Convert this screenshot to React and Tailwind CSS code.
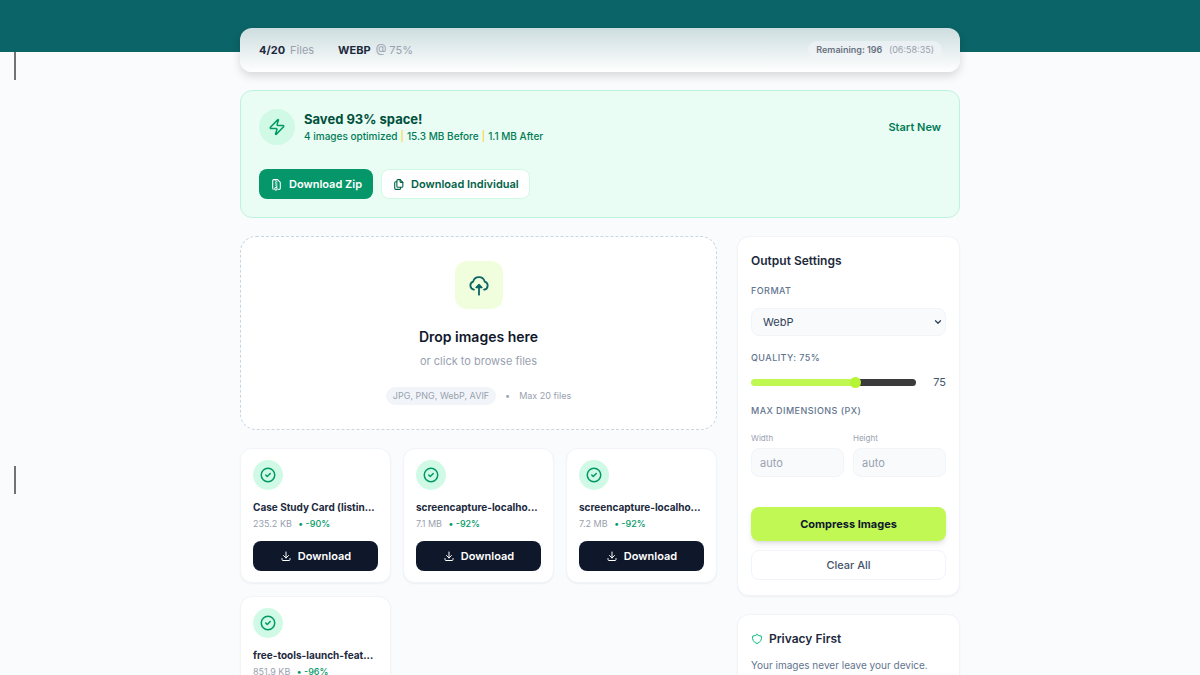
import React, { useState } from 'react';
import { Zap } from 'lucide-react';
import { TbChevronDown, TbCircleCheck, TbDownload, TbFileZip, TbFiles, TbShield } from 'react-icons/tb';

const FILES = [
    { id: 1, name: 'Case Study Card (listin...', size: '235.2 KB', saved: '-90%' },
    { id: 2, name: 'screencapture-localho...', size: '7.1 MB', saved: '-92%' },
    { id: 3, name: 'screencapture-localho...', size: '7.2 MB', saved: '-92%' },
    { id: 4, name: 'free-tools-launch-feat...', size: '851.9 KB', saved: '-96%' },
];

const MIN_QUALITY = 30;
const MAX_QUALITY = 100;

function CloudArrowIcon() {
    return (
        <svg width="22" height="22" viewBox="0 0 24 24" fill="none" stroke="currentColor" strokeWidth="2" strokeLinecap="round" strokeLinejoin="round" aria-hidden="true">
            <path d="M6.5 17A4.5 4.5 0 0 1 5.6 8.3a6.5 6.5 0 0 1 12.6-.1A4.5 4.5 0 0 1 17.5 17" />
            <path d="M12 22.5V13" />
            <path d="M12 11.5l3.2 3.2H8.8z" fill="currentColor" strokeWidth="1.5" />
        </svg>
    );
}

function StatusBar({ quality }) {
    return (
        <div className="relative flex items-center justify-between h-11 pl-[19px] pr-[18px] rounded-xl bg-gradient-to-b from-[#cddddf] to-white shadow-[0_4px_10px_rgba(0,0,0,0.14)]">
            <div className="flex items-center gap-6 text-[11px] text-gray-400">
                <span><strong className="font-bold text-slate-800 mr-[5px]">4/20</strong>Files</span>
                <span><strong className="font-bold text-slate-800 mr-[5px]">WEBP</strong>@ {quality}%</span>
            </div>
            <div className="rounded-full bg-slate-100/60 px-2 py-px text-[9px] leading-4 text-gray-400">
                <span className="font-semibold text-gray-500 mr-1">Remaining: 196</span> (06:58:35)
            </div>
        </div>
    );
}

function SavedBanner() {
    return (
        <section className="mt-[18px] rounded-xl border border-[#bdf3dc] bg-[#e9fdf4] px-[18px] py-[18px]">
            <div className="flex items-center justify-between">
                <div className="flex items-center gap-[9px]">
                    <div className="flex size-9 items-center justify-center rounded-full bg-emerald-100 text-emerald-600">
                        <Zap size={18} />
                    </div>
                    <div className="pt-0.5">
                        <h2 className="text-[13px] leading-[17px] font-bold text-emerald-900">Saved 93% space!</h2>
                        <p className="flex gap-[3px] text-[10px] leading-[17px] font-medium text-emerald-700">
                            <span>4 images optimized</span>
                            <span className="text-amber-300">|</span>
                            <span>15.3 MB Before</span>
                            <span className="text-amber-300">|</span>
                            <span>1.1 MB After</span>
                        </p>
                    </div>
                </div>
                <button type="button" className="text-[11px] font-semibold text-emerald-700">Start New</button>
            </div>
            <div className="mt-6 flex gap-2">
                <button type="button" className="flex h-[30px] items-center gap-1.5 rounded-lg bg-[#059669] px-[11px] text-[11px] font-semibold text-white">
                    <TbFileZip size={13} />
                    Download Zip
                </button>
                <button type="button" className="flex h-[30px] items-center gap-1.5 rounded-lg border border-emerald-100 bg-white px-2.5 text-[11px] font-semibold text-emerald-800">
                    <TbFiles size={13} />
                    Download Individual
                </button>
            </div>
        </section>
    );
}

function DropZone() {
    return (
        <button type="button" className="flex w-full flex-col items-center rounded-2xl border border-dashed border-slate-300 bg-white pt-6 pb-6">
            <span className="flex size-12 items-center justify-center rounded-xl bg-[#f1fedd] text-[#0b6666]">
                <CloudArrowIcon />
            </span>
            <span className="mt-[18px] text-[14px] leading-5 font-semibold text-slate-900">Drop images here</span>
            <span className="mt-1.5 text-[11px] leading-4 text-gray-400">or click to browse files</span>
            <span className="mt-[18px] flex items-center gap-[9px] text-[9px] leading-[18px] text-gray-400">
                <span className="rounded-full bg-slate-100 px-[7px]">JPG, PNG, WebP, AVIF</span>
                <span>•</span>
                <span>Max 20 files</span>
            </span>
        </button>
    );
}

function FileCard({ file }) {
    return (
        <li className="min-w-0 rounded-xl border border-slate-100 bg-white px-3 py-[11px] shadow-xs">
            <div className="flex size-[30px] items-center justify-center rounded-full bg-emerald-100 text-emerald-600">
                <TbCircleCheck size={18} />
            </div>
            <p className="mt-2 text-[10px] leading-[18px] font-bold whitespace-nowrap text-slate-800">{file.name}</p>
            <p className="text-[9px] leading-4 text-gray-400">
                {file.size} <span className="ml-1 font-medium text-emerald-600">• {file.saved}</span>
            </p>
            <button type="button" className="mt-[9px] flex h-[30px] w-full items-center justify-center gap-1.5 rounded-lg bg-[#0f172a] text-[11px] font-semibold text-white">
                <TbDownload size={12} />
                Download
            </button>
        </li>
    );
}

function OutputSettings({ quality, setQuality }) {
    const fill = ((quality - MIN_QUALITY) / (MAX_QUALITY - MIN_QUALITY)) * 100;

    return (
        <section className="rounded-xl border border-slate-100 bg-white px-[13px] pt-[14px] pb-[15px] shadow-xs">
            <h2 className="text-[12px] leading-5 font-semibold text-slate-800">Output Settings</h2>

            <label htmlFor="format" className="mt-3 block text-[9px] leading-4 font-medium tracking-wider text-slate-500">FORMAT</label>
            <div className="relative mt-[9px]">
                <select id="format" className="block h-7 w-full appearance-none rounded-lg border border-slate-100 bg-slate-50 px-[11px] text-[11px] text-slate-700">
                    <option>WebP</option>
                    <option>AVIF</option>
                    <option>JPG</option>
                </select>
                <TbChevronDown size={10} strokeWidth={3} className="pointer-events-none absolute top-[9px] right-[3px] text-slate-700" />
            </div>

            <label htmlFor="quality" className="mt-[14px] block text-[9px] leading-4 font-medium tracking-wider text-slate-500">QUALITY: {quality}%</label>
            <div className="mt-2 flex items-center justify-between gap-[17px]">
                <input
                    id="quality"
                    type="range"
                    min={MIN_QUALITY}
                    max={MAX_QUALITY}
                    value={quality}
                    onChange={(e) => setQuality(Number(e.target.value))}
                    className="h-[7px] min-w-0 flex-1 appearance-none rounded-full bg-[#3b3b3b] [&::-webkit-slider-thumb]:size-[11px] [&::-webkit-slider-thumb]:appearance-none [&::-webkit-slider-thumb]:rounded-full [&::-webkit-slider-thumb]:bg-[#b5f536]"
                    style={{ backgroundImage: `linear-gradient(to right, #bff850 ${fill}%, transparent 0)` }}
                />
                <output htmlFor="quality" className="text-[11px] leading-4 text-slate-600">{quality}</output>
            </div>

            <fieldset>
                <legend className="pt-[13px] text-[9px] leading-4 font-medium tracking-wider text-slate-500">MAX DIMENSIONS (PX)</legend>
                <div className="mt-[13px] grid grid-cols-2 gap-[9px]">
                    <label className="text-[8px] leading-3 text-gray-400">
                        Width
                        <input type="text" placeholder="auto" className="mt-1 block h-[29px] w-full rounded-lg border border-slate-100 bg-slate-50 px-2 text-[11px] placeholder:text-gray-400" />
                    </label>
                    <label className="text-[8px] leading-3 text-gray-400">
                        Height
                        <input type="text" placeholder="auto" className="mt-1 block h-[29px] w-full rounded-lg border border-slate-100 bg-slate-50 px-2 text-[11px] placeholder:text-gray-400" />
                    </label>
                </div>
            </fieldset>

            <button type="button" className="mt-[30px] h-[34px] w-full rounded-lg bg-[#c1f854] text-[11px] font-bold text-slate-900 shadow-md">Compress Images</button>
            <button type="button" className="mt-[9px] h-[30px] w-full rounded-lg border border-slate-100 bg-white text-[11px] font-medium text-slate-600">Clear All</button>
        </section>
    );
}

export default function App() {
    const [quality, setQuality] = useState(75);

    return (
        <div className="relative h-screen overflow-hidden bg-[#fafbfd] font-['Inter',sans-serif]">
            <div className="absolute inset-x-0 top-0 h-[52px] bg-[#0b6467]" />
            <div className="absolute left-[14px] top-[52px] h-7 w-0.5 bg-neutral-500" />
            <div className="absolute left-[14px] top-[466px] h-7 w-0.5 bg-neutral-500" />
            <main className="relative mx-auto max-w-[720px] pt-7">
                <StatusBar quality={quality} />
                <SavedBanner />
                <div className="mt-[18px] grid grid-cols-[minmax(0,1fr)_223px] items-start gap-5">
                    <div>
                        <DropZone />
                        <ul className="mt-[18px] grid grid-cols-3 gap-x-3 gap-y-[13px]">
                            {FILES.map((file) => (
                                <FileCard key={file.id} file={file} />
                            ))}
                        </ul>
                    </div>
                    <aside>
                        <OutputSettings quality={quality} setQuality={setQuality} />
                        <section className="mt-[18px] rounded-xl border border-slate-100 bg-white px-[13px] py-[14px] shadow-xs">
                            <h2 className="flex items-center gap-1.5 text-[12px] leading-5 font-semibold text-slate-800">
                                <TbShield size={12} className="text-emerald-500" />
                                Privacy First
                            </h2>
                            <p className="mt-1.5 text-[10px] leading-5 text-slate-500">Your images never leave your device.</p>
                        </section>
                    </aside>
                </div>
            </main>
        </div>
    );
}
